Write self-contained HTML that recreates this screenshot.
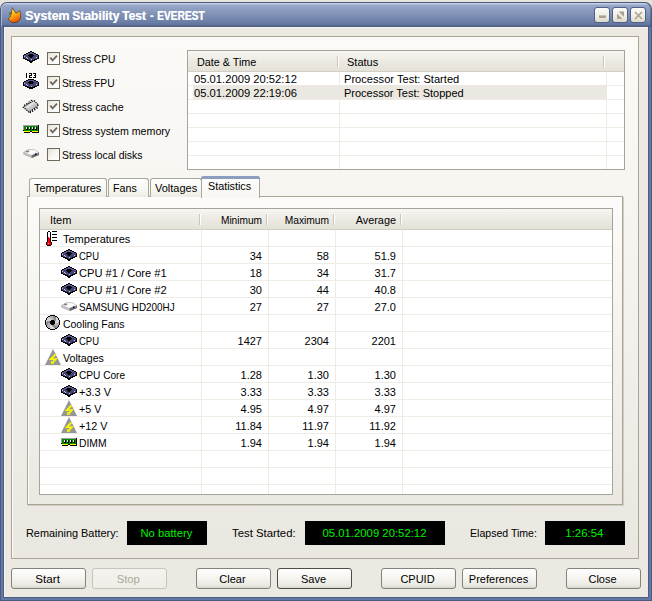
<!DOCTYPE html><html><head><meta charset="utf-8"><style>
*{box-sizing:border-box;margin:0;padding:0}
html,body{width:652px;height:601px;overflow:hidden;background:#e7e4db;font-family:"Liberation Sans",sans-serif;font-size:11px;line-height:14px;color:#000}
.a{position:absolute}
svg{position:absolute;overflow:visible}
#win{position:absolute;left:0;top:2px;width:652px;height:599px;background:#4b5b80;border-radius:7px 7px 0 0}
#title{position:absolute;left:1px;top:1px;width:650px;height:24px;border-radius:6px 6px 0 0;
 background:linear-gradient(#c4cfe8 0,#c4cfe8 1px,#98a8c8 2px,#8595b9 10px,#6e82aa 18px,#5f749c 22px,#4f5f85 23px,#4a5a80 24px);box-shadow:inset 1px 0 0 rgba(200,212,236,0.6), inset -1px 0 0 rgba(60,75,110,0.4)}
#frame{position:absolute;left:1px;top:25px;width:650px;height:573px;background:#6379a3;border-left:0;}
#fin{position:absolute;left:3px;top:27px;width:646px;height:571px;border:1px solid #4b5d86;border-top:0}
#body{position:absolute;left:4px;top:27px;width:644px;height:570px;background:#ece9e2;border-top:1px solid #f7f4ee;border-left:1px solid #f7f4ee}
.ttl{position:absolute;left:26px;top:9px;color:#fff;font-weight:bold;font-size:12.5px;white-space:nowrap;transform-origin:0 0}
.tb{position:absolute;top:7px;width:16px;height:16px;border:1px solid #4f6088;border-radius:3px;background:linear-gradient(#fdfcf9,#ebe8dd 70%,#dcd8cc)}
.panel{position:absolute;border:1px solid #aca497;box-shadow:inset 1px 1px 0 #fbfaf6}
.t{position:absolute;white-space:nowrap;transform-origin:0 0}
.n{position:absolute;white-space:nowrap;text-align:right}
.cb{position:absolute;left:47px;width:13px;height:13px;border:1px solid #6f695c;background:linear-gradient(135deg,#e2dfd6,#f6f5f0 45%,#fff)}
.lv{position:absolute;background:#fff;border:1px solid #a5a39b;overflow:hidden}
.hdr{position:absolute;left:0;top:0;height:21px;background:linear-gradient(#f7f6f2,#ece9e2 55%,#e4e1d8);border-bottom:1px solid #d3cfc4}
.dv{position:absolute;top:5px;width:2px;height:11px;border-left:1px solid #c9c5b9;border-right:1px solid #fff}
.btn{position:absolute;top:568px;width:75px;height:21px;border:1px solid #858379;border-radius:3px;background:linear-gradient(#ffffff,#f6f5f1 45%,#ebe9e3 85%,#d9d6cc);text-align:center;line-height:20px;padding-right:2px}
.btn span{display:inline-block}
.disp{position:absolute;top:521px;height:24px;background:#000;color:#00f000;text-align:center;line-height:25px}
.disp span{display:inline-block}
.gh{position:absolute;height:1px;background:#eeece5}
.gv{position:absolute;width:1px;background:#eeece5}
.tab{position:absolute;height:19px;border:1px solid #a9a69c;border-bottom:none;border-radius:3px 3px 0 0;background:linear-gradient(#fefefd,#f5f4ef 70%,#ecebe4)}
</style></head><body>
<div id="win"><div id="title"></div><div id="frame"></div></div><div id="fin"></div><div id="body"></div>
<svg width="0" height="0" style="left:0;top:0"><defs>
<linearGradient id="fl" x1="0.2" y1="0" x2="0.6" y2="1"><stop offset="0" stop-color="#fffa50"/><stop offset="0.35" stop-color="#ffc818"/><stop offset="0.6" stop-color="#ff9a10"/><stop offset="1" stop-color="#e84800"/></linearGradient>
<linearGradient id="hddg" x1="0" y1="0" x2="1" y2="1"><stop offset="0" stop-color="#e0e0e0"/><stop offset="0.5" stop-color="#ffffff"/><stop offset="1" stop-color="#c8c8c8"/></linearGradient>
<g id="volt">
 <polygon points="8,0 16,16 0,16" fill="#969696"/>
 <path d="M10.5,5.5 L5.8,10.2 L10.8,10.2 L7.6,13.6" stroke="#f8f800" stroke-width="1.8" fill="none" stroke-linejoin="miter"/><polygon points="6,11.5 6.2,15 9.2,14.8" fill="#f8f800"/>
</g>
<g id="hdd">
 <polygon points="0.5,3 5,0.5 11.5,0.5 16,3.5 16,6 9,9 0.5,5.5" fill="#9a9a9a"/>
 <polygon points="1,3 5,1 11.5,1 15.5,3.6 8.5,6.5" fill="url(#hddg)"/>
 <ellipse cx="4.5" cy="2.4" rx="1.8" ry="0.9" fill="#808080"/>
 <polygon points="1,3.2 8.5,6.6 8.5,8.6 0.8,5.2" fill="#c4c4c4"/>
 <polygon points="8.5,6.6 15.8,3.6 15.8,6 9,8.8" fill="#666"/>
 <rect x="12" y="4.5" width="1.5" height="1.5" fill="#000"/><rect x="13.6" y="4" width="1.5" height="1.6" fill="#8888e0"/>
</g>
</defs></svg>
<svg style="left:8px;top:7px" width="14" height="17" viewBox="0 0 14 17"><path d="M4.4,0.6 C5.5,2.5 6.5,4.5 7.9,6.2 C9.5,5.5 10.8,4.8 11.7,3.6 C12.6,6 13.2,9.5 11.8,12.5 C10.5,15 7.5,16 5,15.6 C2.8,15.2 1.2,13.6 0.4,11.5 L2.4,9.6 L1.8,5.6 L3.3,7.4 C3.4,5 3.8,2.5 4.4,0.6 Z" fill="url(#fl)" stroke="#4a3020" stroke-width="0.7" stroke-linejoin="round"/></svg>
<div class="ttl" style="left:25px;transform:scaleX(1.0);text-shadow:0.5px 0 0 rgba(255,255,255,0.7)">System</div>
<div class="ttl" style="left:72px;transform:scaleX(0.97);text-shadow:0.5px 0 0 rgba(255,255,255,0.7)">Stability</div>
<div class="ttl" style="left:122px;transform:scaleX(0.96);text-shadow:0.5px 0 0 rgba(255,255,255,0.7)">Test</div>
<div class="ttl" style="left:150px;transform:scaleX(0.8);text-shadow:0.5px 0 0 rgba(255,255,255,0.7)">-</div>
<div class="ttl" style="left:157px;transform:scaleX(0.815);text-shadow:0.5px 0 0 rgba(255,255,255,0.7)">EVEREST</div>
<div class="tb" style="left:594px"><div class="a" style="left:4px;top:7px;width:7px;height:3px;background:#aaa48f;border-top:1px solid #c9c4b0"></div></div>
<div class="tb" style="left:612px"><svg style="left:0.5px;top:0.5px" width="13" height="13"><path d="M3,4.5 L3,10 L8.5,10 Z" fill="#aaa48f"/><path d="M10,2.5 L10,8 L4.5,2.5 Z" fill="#aaa48f"/></svg></div>
<div class="tb" style="left:630px"><svg style="left:0.5px;top:0.5px" width="13" height="13"><path d="M3,3 L10,10 M10,3 L3,10" stroke="#aaa48f" stroke-width="1.6"/></svg></div>
<div class="panel" style="left:11px;top:36px;width:628px;height:523px;background:linear-gradient(#fbfaf7,#f4f3ee 45%,#e9e7e0)"></div>
<div class="cb" style="top:52px"><svg style="left:0;top:0" width="11" height="11"><path d="M2.3,4.6 L4.6,7.4 L9,2.6" stroke="#6f6a5e" stroke-width="1.9" fill="none"/></svg></div>
<div class="t" style="left:62px;top:52px;transform:scaleX(0.93);">Stress CPU</div>
<div class="cb" style="top:76px"><svg style="left:0;top:0" width="11" height="11"><path d="M2.3,4.6 L4.6,7.4 L9,2.6" stroke="#6f6a5e" stroke-width="1.9" fill="none"/></svg></div>
<div class="t" style="left:62px;top:76px;transform:scaleX(0.936);">Stress FPU</div>
<div class="cb" style="top:100px"><svg style="left:0;top:0" width="11" height="11"><path d="M2.3,4.6 L4.6,7.4 L9,2.6" stroke="#6f6a5e" stroke-width="1.9" fill="none"/></svg></div>
<div class="t" style="left:62px;top:100px;transform:scaleX(0.97);">Stress cache</div>
<div class="cb" style="top:124px"><svg style="left:0;top:0" width="11" height="11"><path d="M2.3,4.6 L4.6,7.4 L9,2.6" stroke="#6f6a5e" stroke-width="1.9" fill="none"/></svg></div>
<div class="t" style="left:62px;top:124px;transform:scaleX(0.967);">Stress system memory</div>
<div class="cb" style="top:148px"></div>
<div class="t" style="left:62px;top:148px;transform:scaleX(0.946);">Stress local disks</div>
<svg style="left:23px;top:51px" width="16" height="12" shape-rendering="crispEdges"><rect x="7" y="0" width="2" height="1" fill="#000"/><rect x="5" y="1" width="2" height="1" fill="#000"/><rect x="7" y="1" width="2" height="1" fill="#5c5d94"/><rect x="9" y="1" width="2" height="1" fill="#000"/><rect x="3" y="2" width="2" height="1" fill="#000"/><rect x="5" y="2" width="6" height="1" fill="#5c5d94"/><rect x="11" y="2" width="2" height="1" fill="#000"/><rect x="1" y="3" width="2" height="1" fill="#000"/><rect x="3" y="3" width="3" height="1" fill="#5c5d94"/><rect x="6" y="3" width="4" height="1" fill="#000"/><rect x="10" y="3" width="3" height="1" fill="#5c5d94"/><rect x="13" y="3" width="2" height="1" fill="#000"/><rect x="0" y="4" width="1" height="1" fill="#000"/><rect x="1" y="4" width="2" height="1" fill="#5c5d94"/><rect x="3" y="4" width="2" height="1" fill="#434474"/><rect x="5" y="4" width="6" height="1" fill="#000"/><rect x="11" y="4" width="2" height="1" fill="#434474"/><rect x="13" y="4" width="2" height="1" fill="#5c5d94"/><rect x="15" y="4" width="1" height="1" fill="#000"/><rect x="0" y="5" width="1" height="1" fill="#000"/><rect x="1" y="5" width="1" height="1" fill="#c8c8d8"/><rect x="2" y="5" width="4" height="1" fill="#434474"/><rect x="6" y="5" width="4" height="1" fill="#000"/><rect x="10" y="5" width="5" height="1" fill="#434474"/><rect x="15" y="5" width="1" height="1" fill="#000"/><rect x="0" y="6" width="1" height="1" fill="#000"/><rect x="1" y="6" width="2" height="1" fill="#434474"/><rect x="3" y="6" width="1" height="1" fill="#c8c8d8"/><rect x="4" y="6" width="3" height="1" fill="#434474"/><rect x="7" y="6" width="2" height="1" fill="#000"/><rect x="9" y="6" width="4" height="1" fill="#434474"/><rect x="13" y="6" width="1" height="1" fill="#c8c8d8"/><rect x="14" y="6" width="1" height="1" fill="#434474"/><rect x="15" y="6" width="1" height="1" fill="#000"/><rect x="0" y="7" width="2" height="1" fill="#000"/><rect x="2" y="7" width="2" height="1" fill="#434474"/><rect x="4" y="7" width="1" height="1" fill="#c8c8d8"/><rect x="5" y="7" width="9" height="1" fill="#434474"/><rect x="14" y="7" width="2" height="1" fill="#000"/><rect x="2" y="8" width="3" height="1" fill="#000"/><rect x="5" y="8" width="3" height="1" fill="#434474"/><rect x="8" y="8" width="1" height="1" fill="#c8c8d8"/><rect x="9" y="8" width="2" height="1" fill="#434474"/><rect x="11" y="8" width="3" height="1" fill="#000"/><rect x="4" y="9" width="3" height="1" fill="#000"/><rect x="7" y="9" width="2" height="1" fill="#434474"/><rect x="9" y="9" width="3" height="1" fill="#000"/><rect x="6" y="10" width="4" height="1" fill="#000"/><rect x="7" y="11" width="2" height="1" fill="#000"/></svg>
<svg style="left:26px;top:73px" width="11" height="5" shape-rendering="crispEdges"><path d="M0.5,0 V5 M3,0.5 H5.5 V2.5 H3.5 V4.5 H6 M7,0.5 H9.5 V4.5 H7 M8,2.5 H9.5" stroke="#000" stroke-width="1" fill="none"/></svg>
<svg style="left:23px;top:79px" width="16" height="10" shape-rendering="crispEdges"><rect x="5" y="0" width="6" height="1" fill="#000"/><rect x="3" y="1" width="2" height="1" fill="#000"/><rect x="5" y="1" width="6" height="1" fill="#5c5d94"/><rect x="11" y="1" width="2" height="1" fill="#000"/><rect x="1" y="2" width="2" height="1" fill="#000"/><rect x="3" y="2" width="3" height="1" fill="#5c5d94"/><rect x="6" y="2" width="4" height="1" fill="#000"/><rect x="10" y="2" width="3" height="1" fill="#5c5d94"/><rect x="13" y="2" width="2" height="1" fill="#000"/><rect x="0" y="3" width="1" height="1" fill="#000"/><rect x="1" y="3" width="2" height="1" fill="#5c5d94"/><rect x="3" y="3" width="2" height="1" fill="#434474"/><rect x="5" y="3" width="6" height="1" fill="#000"/><rect x="11" y="3" width="2" height="1" fill="#434474"/><rect x="13" y="3" width="2" height="1" fill="#5c5d94"/><rect x="15" y="3" width="1" height="1" fill="#000"/><rect x="0" y="4" width="1" height="1" fill="#000"/><rect x="1" y="4" width="1" height="1" fill="#c8c8d8"/><rect x="2" y="4" width="4" height="1" fill="#434474"/><rect x="6" y="4" width="4" height="1" fill="#000"/><rect x="10" y="4" width="5" height="1" fill="#434474"/><rect x="15" y="4" width="1" height="1" fill="#000"/><rect x="0" y="5" width="1" height="1" fill="#000"/><rect x="1" y="5" width="2" height="1" fill="#434474"/><rect x="3" y="5" width="1" height="1" fill="#c8c8d8"/><rect x="4" y="5" width="9" height="1" fill="#434474"/><rect x="13" y="5" width="1" height="1" fill="#c8c8d8"/><rect x="14" y="5" width="1" height="1" fill="#434474"/><rect x="15" y="5" width="1" height="1" fill="#000"/><rect x="0" y="6" width="2" height="1" fill="#000"/><rect x="2" y="6" width="2" height="1" fill="#434474"/><rect x="4" y="6" width="1" height="1" fill="#c8c8d8"/><rect x="5" y="6" width="9" height="1" fill="#434474"/><rect x="14" y="6" width="2" height="1" fill="#000"/><rect x="2" y="7" width="3" height="1" fill="#000"/><rect x="5" y="7" width="3" height="1" fill="#434474"/><rect x="8" y="7" width="1" height="1" fill="#c8c8d8"/><rect x="9" y="7" width="2" height="1" fill="#434474"/><rect x="11" y="7" width="3" height="1" fill="#000"/><rect x="4" y="8" width="8" height="1" fill="#000"/><rect x="6" y="9" width="4" height="1" fill="#000"/></svg>
<svg style="left:22px;top:99px" width="18" height="14">
 <polygon points="12,1.4 16.6,6.1 7.1,13.2 1.2,8.1" fill="#bdbdbd" stroke="#000" stroke-width="1.1" stroke-dasharray="1.3,1"/>
 <polygon points="11.5,2.5 15,6 8,11 3,8" fill="#c8c8c8"/>
 <polygon points="11.5,2.5 13,4 5,9.6 3,8" fill="#e4e4e4"/>
 <path d="M3,6.8 L2.4,5.6 M5.2,5.2 L4.6,4 M7.4,3.6 L6.8,2.4 M9.6,2.1 L9,0.9 M14.6,8.2 L15.4,9.6 M12.4,9.8 L13.2,11.2 M10.2,11.4 L11,12.8 M8,13 L8.6,14" stroke="#000" stroke-width="1.2"/>
</svg>
<svg style="left:23px;top:125px" width="16" height="8" shape-rendering="crispEdges"><rect x="0" y="0" width="15" height="1" fill="#a49ea4"/><rect x="15" y="0" width="1" height="1" fill="#000"/><rect x="0" y="1" width="1" height="1" fill="#a49ea4"/><rect x="1" y="1" width="14" height="1" fill="#008c00"/><rect x="15" y="1" width="1" height="1" fill="#000"/><rect x="0" y="2" width="1" height="1" fill="#a49ea4"/><rect x="1" y="2" width="2" height="1" fill="#008c00"/><rect x="3" y="2" width="1" height="1" fill="#f0f0f0"/><rect x="4" y="2" width="1" height="1" fill="#000"/><rect x="5" y="2" width="1" height="1" fill="#008c00"/><rect x="6" y="2" width="1" height="1" fill="#f0f0f0"/><rect x="7" y="2" width="1" height="1" fill="#000"/><rect x="8" y="2" width="1" height="1" fill="#008c00"/><rect x="9" y="2" width="1" height="1" fill="#f0f0f0"/><rect x="10" y="2" width="1" height="1" fill="#000"/><rect x="11" y="2" width="1" height="1" fill="#008c00"/><rect x="12" y="2" width="1" height="1" fill="#f0f0f0"/><rect x="13" y="2" width="1" height="1" fill="#000"/><rect x="14" y="2" width="1" height="1" fill="#008c00"/><rect x="15" y="2" width="1" height="1" fill="#000"/><rect x="0" y="3" width="1" height="1" fill="#a49ea4"/><rect x="1" y="3" width="2" height="1" fill="#008c00"/><rect x="3" y="3" width="1" height="1" fill="#f0f0f0"/><rect x="4" y="3" width="1" height="1" fill="#000"/><rect x="5" y="3" width="1" height="1" fill="#008c00"/><rect x="6" y="3" width="1" height="1" fill="#f0f0f0"/><rect x="7" y="3" width="1" height="1" fill="#000"/><rect x="8" y="3" width="1" height="1" fill="#008c00"/><rect x="9" y="3" width="1" height="1" fill="#f0f0f0"/><rect x="10" y="3" width="1" height="1" fill="#000"/><rect x="11" y="3" width="1" height="1" fill="#008c00"/><rect x="12" y="3" width="1" height="1" fill="#f0f0f0"/><rect x="13" y="3" width="1" height="1" fill="#000"/><rect x="14" y="3" width="1" height="1" fill="#008c00"/><rect x="15" y="3" width="1" height="1" fill="#000"/><rect x="0" y="4" width="1" height="1" fill="#a49ea4"/><rect x="1" y="4" width="2" height="1" fill="#008c00"/><rect x="3" y="4" width="2" height="1" fill="#000"/><rect x="5" y="4" width="1" height="1" fill="#008c00"/><rect x="6" y="4" width="2" height="1" fill="#000"/><rect x="8" y="4" width="1" height="1" fill="#008c00"/><rect x="9" y="4" width="2" height="1" fill="#000"/><rect x="11" y="4" width="1" height="1" fill="#008c00"/><rect x="12" y="4" width="2" height="1" fill="#000"/><rect x="14" y="4" width="1" height="1" fill="#008c00"/><rect x="15" y="4" width="1" height="1" fill="#000"/><rect x="0" y="5" width="1" height="1" fill="#000"/><rect x="1" y="5" width="14" height="1" fill="#008c00"/><rect x="15" y="5" width="1" height="1" fill="#000"/><rect x="1" y="6" width="6" height="1" fill="#ffff00"/><rect x="7" y="6" width="2" height="1" fill="#000"/><rect x="9" y="6" width="6" height="1" fill="#ffff00"/><rect x="15" y="6" width="1" height="1" fill="#000"/><rect x="1" y="7" width="6" height="1" fill="#000"/><rect x="9" y="7" width="7" height="1" fill="#000"/></svg>
<svg style="left:23px;top:149px" width="16" height="9"><use href="#hdd"/></svg>
<div class="lv" style="left:187px;top:50px;width:438px;height:120px">
 <div class="hdr" style="width:436px"></div>
 <div class="dv" style="left:149px"></div><div class="dv" style="left:415px"></div>
 <div class="gh" style="left:0;top:34px;width:436px"></div>
 <div class="gh" style="left:0;top:48px;width:436px"></div>
 <div class="gh" style="left:0;top:62px;width:436px"></div>
 <div class="gh" style="left:0;top:76px;width:436px"></div>
 <div class="gh" style="left:0;top:90px;width:436px"></div>
 <div class="gh" style="left:0;top:104px;width:436px"></div>
 <div class="gv" style="left:151px;top:21px;height:97px"></div>
 <div class="gv" style="left:418px;top:21px;height:97px"></div>
 <div class="a" style="left:5px;top:35px;width:414px;height:13px;background:#ebe8e1"></div>
 <div class="a" style="left:5px;top:34px;width:414px;height:1px;background:#ebe8e1"></div>
<div class="t" style="left:9px;top:4px;transform:scaleX(0.98);">Date &amp; Time</div>
<div class="t" style="left:159px;top:4px;">Status</div>
<div class="t" style="left:6px;top:21px;transform:scaleX(1.02);">05.01.2009 20:52:12</div>
<div class="t" style="left:156px;top:21px;transform:scaleX(1.01);">Processor Test: Started</div>
<div class="t" style="left:6px;top:35px;transform:scaleX(1.02);">05.01.2009 22:19:06</div>
<div class="t" style="left:156px;top:35px;">Processor Test: Stopped</div>
</div>
<div class="panel" style="left:27px;top:196px;width:596px;height:309px;background:linear-gradient(#fcfbf9,#f4f3ee 45%,#eae8e1);box-shadow:inset 1px 1px 0 #fdfdfb, 1px 1px 0 #d0cdc3"></div>
<div class="tab" style="left:29px;top:178px;width:78px"></div>
<div class="t" style="left:34px;top:181px;">Temperatures</div>
<div class="tab" style="left:108px;top:178px;width:41px"></div>
<div class="t" style="left:113px;top:181px;transform:scaleX(0.97);">Fans</div>
<div class="tab" style="left:150px;top:178px;width:52px"></div>
<div class="t" style="left:155px;top:181px;">Voltages</div>
<div class="a" style="left:201px;top:176px;width:59px;height:22px;border:1px solid #a9a69c;border-bottom:none;border-top:none;border-radius:3px 3px 0 0;background:linear-gradient(#fcfcfa,#f8f7f4)"></div>
<div class="a" style="left:201px;top:176px;width:59px;height:3px;background:#8d9dbe;border-radius:3px 3px 0 0"></div>
<div class="t" style="left:208px;top:179px;transform:scaleX(0.98);">Statistics</div>
<div class="lv" style="left:39px;top:208px;width:574px;height:287px">
 <div class="hdr" style="width:572px"></div>
 <div class="dv" style="left:159px"></div>
 <div class="dv" style="left:226px"></div>
 <div class="dv" style="left:293px"></div>
 <div class="dv" style="left:360px"></div>
 <div class="gh" style="left:0;top:37px;width:572px"></div>
 <div class="gh" style="left:0;top:54px;width:572px"></div>
 <div class="gh" style="left:0;top:71px;width:572px"></div>
 <div class="gh" style="left:0;top:88px;width:572px"></div>
 <div class="gh" style="left:0;top:105px;width:572px"></div>
 <div class="gh" style="left:0;top:122px;width:572px"></div>
 <div class="gh" style="left:0;top:139px;width:572px"></div>
 <div class="gh" style="left:0;top:156px;width:572px"></div>
 <div class="gh" style="left:0;top:173px;width:572px"></div>
 <div class="gh" style="left:0;top:190px;width:572px"></div>
 <div class="gh" style="left:0;top:207px;width:572px"></div>
 <div class="gh" style="left:0;top:224px;width:572px"></div>
 <div class="gh" style="left:0;top:241px;width:572px"></div>
 <div class="gh" style="left:0;top:258px;width:572px"></div>
 <div class="gh" style="left:0;top:275px;width:572px"></div>
 <div class="gh" style="left:0;top:292px;width:572px"></div>
 <div class="gv" style="left:161px;top:21px;height:270px"></div>
 <div class="gv" style="left:228px;top:21px;height:270px"></div>
 <div class="gv" style="left:295px;top:21px;height:270px"></div>
 <div class="gv" style="left:362px;top:21px;height:270px"></div>
<div class="t" style="left:10px;top:4px;">Item</div>
<div class="n" style="left:160px;top:4px;width:62px;transform:scaleX(0.92);transform-origin:100% 0;">Minimum</div>
<div class="n" style="left:227px;top:4px;width:62px;transform:scaleX(0.93);transform-origin:100% 0;">Maximum</div>
<div class="n" style="left:294px;top:4px;width:62px;transform:scaleX(0.99);transform-origin:100% 0;">Average</div>
<div class="t" style="left:23px;top:23px;">Temperatures</div>
 <svg style="left:6px;top:22px" width="12" height="15" shape-rendering="crispEdges"><rect x="2" y="0" width="2" height="1" fill="#000"/><rect x="6" y="0" width="5" height="1" fill="#000"/><rect x="1" y="1" width="1" height="1" fill="#000"/><rect x="2" y="1" width="2" height="1" fill="#fff"/><rect x="4" y="1" width="1" height="1" fill="#000"/><rect x="1" y="2" width="1" height="1" fill="#000"/><rect x="2" y="2" width="2" height="1" fill="#fff"/><rect x="4" y="2" width="1" height="1" fill="#000"/><rect x="1" y="3" width="1" height="1" fill="#000"/><rect x="2" y="3" width="2" height="1" fill="#fff"/><rect x="4" y="3" width="1" height="1" fill="#000"/><rect x="6" y="3" width="5" height="1" fill="#000"/><rect x="1" y="4" width="1" height="1" fill="#000"/><rect x="2" y="4" width="2" height="1" fill="#fff"/><rect x="4" y="4" width="1" height="1" fill="#000"/><rect x="1" y="5" width="1" height="1" fill="#000"/><rect x="2" y="5" width="2" height="1" fill="#fff"/><rect x="4" y="5" width="1" height="1" fill="#000"/><rect x="1" y="6" width="1" height="1" fill="#000"/><rect x="2" y="6" width="1" height="1" fill="#ff0000"/><rect x="3" y="6" width="1" height="1" fill="#fff"/><rect x="4" y="6" width="1" height="1" fill="#000"/><rect x="6" y="6" width="5" height="1" fill="#000"/><rect x="1" y="7" width="1" height="1" fill="#000"/><rect x="2" y="7" width="2" height="1" fill="#ff0000"/><rect x="4" y="7" width="1" height="1" fill="#000"/><rect x="1" y="8" width="1" height="1" fill="#000"/><rect x="2" y="8" width="2" height="1" fill="#ff0000"/><rect x="4" y="8" width="1" height="1" fill="#000"/><rect x="1" y="9" width="1" height="1" fill="#000"/><rect x="2" y="9" width="2" height="1" fill="#ff0000"/><rect x="4" y="9" width="1" height="1" fill="#000"/><rect x="6" y="9" width="5" height="1" fill="#000"/><rect x="1" y="10" width="1" height="1" fill="#000"/><rect x="2" y="10" width="2" height="1" fill="#ff0000"/><rect x="4" y="10" width="1" height="1" fill="#000"/><rect x="0" y="11" width="1" height="1" fill="#000"/><rect x="1" y="11" width="4" height="1" fill="#ff0000"/><rect x="5" y="11" width="1" height="1" fill="#000"/><rect x="0" y="12" width="1" height="1" fill="#000"/><rect x="1" y="12" width="1" height="1" fill="#ff0000"/><rect x="2" y="12" width="1" height="1" fill="#ff9090"/><rect x="3" y="12" width="2" height="1" fill="#ff0000"/><rect x="5" y="12" width="1" height="1" fill="#000"/><rect x="0" y="13" width="1" height="1" fill="#000"/><rect x="1" y="13" width="4" height="1" fill="#ff0000"/><rect x="5" y="13" width="1" height="1" fill="#000"/><rect x="1" y="14" width="4" height="1" fill="#000"/></svg>
<div class="t" style="left:39px;top:40px;transform:scaleX(0.86);">CPU</div>
<div class="n" style="left:160px;top:40px;width:62px;">34</div>
<div class="n" style="left:227px;top:40px;width:62px;">58</div>
<div class="n" style="left:294px;top:40px;width:62px;">51.9</div>
 <svg style="left:21px;top:40px" width="16" height="12" shape-rendering="crispEdges"><rect x="7" y="0" width="2" height="1" fill="#000"/><rect x="5" y="1" width="2" height="1" fill="#000"/><rect x="7" y="1" width="2" height="1" fill="#5c5d94"/><rect x="9" y="1" width="2" height="1" fill="#000"/><rect x="3" y="2" width="2" height="1" fill="#000"/><rect x="5" y="2" width="6" height="1" fill="#5c5d94"/><rect x="11" y="2" width="2" height="1" fill="#000"/><rect x="1" y="3" width="2" height="1" fill="#000"/><rect x="3" y="3" width="3" height="1" fill="#5c5d94"/><rect x="6" y="3" width="4" height="1" fill="#000"/><rect x="10" y="3" width="3" height="1" fill="#5c5d94"/><rect x="13" y="3" width="2" height="1" fill="#000"/><rect x="0" y="4" width="1" height="1" fill="#000"/><rect x="1" y="4" width="2" height="1" fill="#5c5d94"/><rect x="3" y="4" width="2" height="1" fill="#434474"/><rect x="5" y="4" width="6" height="1" fill="#000"/><rect x="11" y="4" width="2" height="1" fill="#434474"/><rect x="13" y="4" width="2" height="1" fill="#5c5d94"/><rect x="15" y="4" width="1" height="1" fill="#000"/><rect x="0" y="5" width="1" height="1" fill="#000"/><rect x="1" y="5" width="1" height="1" fill="#c8c8d8"/><rect x="2" y="5" width="4" height="1" fill="#434474"/><rect x="6" y="5" width="4" height="1" fill="#000"/><rect x="10" y="5" width="5" height="1" fill="#434474"/><rect x="15" y="5" width="1" height="1" fill="#000"/><rect x="0" y="6" width="1" height="1" fill="#000"/><rect x="1" y="6" width="2" height="1" fill="#434474"/><rect x="3" y="6" width="1" height="1" fill="#c8c8d8"/><rect x="4" y="6" width="3" height="1" fill="#434474"/><rect x="7" y="6" width="2" height="1" fill="#000"/><rect x="9" y="6" width="4" height="1" fill="#434474"/><rect x="13" y="6" width="1" height="1" fill="#c8c8d8"/><rect x="14" y="6" width="1" height="1" fill="#434474"/><rect x="15" y="6" width="1" height="1" fill="#000"/><rect x="0" y="7" width="2" height="1" fill="#000"/><rect x="2" y="7" width="2" height="1" fill="#434474"/><rect x="4" y="7" width="1" height="1" fill="#c8c8d8"/><rect x="5" y="7" width="9" height="1" fill="#434474"/><rect x="14" y="7" width="2" height="1" fill="#000"/><rect x="2" y="8" width="3" height="1" fill="#000"/><rect x="5" y="8" width="3" height="1" fill="#434474"/><rect x="8" y="8" width="1" height="1" fill="#c8c8d8"/><rect x="9" y="8" width="2" height="1" fill="#434474"/><rect x="11" y="8" width="3" height="1" fill="#000"/><rect x="4" y="9" width="3" height="1" fill="#000"/><rect x="7" y="9" width="2" height="1" fill="#434474"/><rect x="9" y="9" width="3" height="1" fill="#000"/><rect x="6" y="10" width="4" height="1" fill="#000"/><rect x="7" y="11" width="2" height="1" fill="#000"/></svg>
<div class="t" style="left:39px;top:57px;transform:scaleX(1.01);">CPU #1 / Core #1</div>
<div class="n" style="left:160px;top:57px;width:62px;">18</div>
<div class="n" style="left:227px;top:57px;width:62px;">34</div>
<div class="n" style="left:294px;top:57px;width:62px;">31.7</div>
 <svg style="left:21px;top:57px" width="16" height="12" shape-rendering="crispEdges"><rect x="7" y="0" width="2" height="1" fill="#000"/><rect x="5" y="1" width="2" height="1" fill="#000"/><rect x="7" y="1" width="2" height="1" fill="#5c5d94"/><rect x="9" y="1" width="2" height="1" fill="#000"/><rect x="3" y="2" width="2" height="1" fill="#000"/><rect x="5" y="2" width="6" height="1" fill="#5c5d94"/><rect x="11" y="2" width="2" height="1" fill="#000"/><rect x="1" y="3" width="2" height="1" fill="#000"/><rect x="3" y="3" width="3" height="1" fill="#5c5d94"/><rect x="6" y="3" width="4" height="1" fill="#000"/><rect x="10" y="3" width="3" height="1" fill="#5c5d94"/><rect x="13" y="3" width="2" height="1" fill="#000"/><rect x="0" y="4" width="1" height="1" fill="#000"/><rect x="1" y="4" width="2" height="1" fill="#5c5d94"/><rect x="3" y="4" width="2" height="1" fill="#434474"/><rect x="5" y="4" width="6" height="1" fill="#000"/><rect x="11" y="4" width="2" height="1" fill="#434474"/><rect x="13" y="4" width="2" height="1" fill="#5c5d94"/><rect x="15" y="4" width="1" height="1" fill="#000"/><rect x="0" y="5" width="1" height="1" fill="#000"/><rect x="1" y="5" width="1" height="1" fill="#c8c8d8"/><rect x="2" y="5" width="4" height="1" fill="#434474"/><rect x="6" y="5" width="4" height="1" fill="#000"/><rect x="10" y="5" width="5" height="1" fill="#434474"/><rect x="15" y="5" width="1" height="1" fill="#000"/><rect x="0" y="6" width="1" height="1" fill="#000"/><rect x="1" y="6" width="2" height="1" fill="#434474"/><rect x="3" y="6" width="1" height="1" fill="#c8c8d8"/><rect x="4" y="6" width="3" height="1" fill="#434474"/><rect x="7" y="6" width="2" height="1" fill="#000"/><rect x="9" y="6" width="4" height="1" fill="#434474"/><rect x="13" y="6" width="1" height="1" fill="#c8c8d8"/><rect x="14" y="6" width="1" height="1" fill="#434474"/><rect x="15" y="6" width="1" height="1" fill="#000"/><rect x="0" y="7" width="2" height="1" fill="#000"/><rect x="2" y="7" width="2" height="1" fill="#434474"/><rect x="4" y="7" width="1" height="1" fill="#c8c8d8"/><rect x="5" y="7" width="9" height="1" fill="#434474"/><rect x="14" y="7" width="2" height="1" fill="#000"/><rect x="2" y="8" width="3" height="1" fill="#000"/><rect x="5" y="8" width="3" height="1" fill="#434474"/><rect x="8" y="8" width="1" height="1" fill="#c8c8d8"/><rect x="9" y="8" width="2" height="1" fill="#434474"/><rect x="11" y="8" width="3" height="1" fill="#000"/><rect x="4" y="9" width="3" height="1" fill="#000"/><rect x="7" y="9" width="2" height="1" fill="#434474"/><rect x="9" y="9" width="3" height="1" fill="#000"/><rect x="6" y="10" width="4" height="1" fill="#000"/><rect x="7" y="11" width="2" height="1" fill="#000"/></svg>
<div class="t" style="left:39px;top:74px;transform:scaleX(1.01);">CPU #1 / Core #2</div>
<div class="n" style="left:160px;top:74px;width:62px;">30</div>
<div class="n" style="left:227px;top:74px;width:62px;">44</div>
<div class="n" style="left:294px;top:74px;width:62px;">40.8</div>
 <svg style="left:21px;top:74px" width="16" height="12" shape-rendering="crispEdges"><rect x="7" y="0" width="2" height="1" fill="#000"/><rect x="5" y="1" width="2" height="1" fill="#000"/><rect x="7" y="1" width="2" height="1" fill="#5c5d94"/><rect x="9" y="1" width="2" height="1" fill="#000"/><rect x="3" y="2" width="2" height="1" fill="#000"/><rect x="5" y="2" width="6" height="1" fill="#5c5d94"/><rect x="11" y="2" width="2" height="1" fill="#000"/><rect x="1" y="3" width="2" height="1" fill="#000"/><rect x="3" y="3" width="3" height="1" fill="#5c5d94"/><rect x="6" y="3" width="4" height="1" fill="#000"/><rect x="10" y="3" width="3" height="1" fill="#5c5d94"/><rect x="13" y="3" width="2" height="1" fill="#000"/><rect x="0" y="4" width="1" height="1" fill="#000"/><rect x="1" y="4" width="2" height="1" fill="#5c5d94"/><rect x="3" y="4" width="2" height="1" fill="#434474"/><rect x="5" y="4" width="6" height="1" fill="#000"/><rect x="11" y="4" width="2" height="1" fill="#434474"/><rect x="13" y="4" width="2" height="1" fill="#5c5d94"/><rect x="15" y="4" width="1" height="1" fill="#000"/><rect x="0" y="5" width="1" height="1" fill="#000"/><rect x="1" y="5" width="1" height="1" fill="#c8c8d8"/><rect x="2" y="5" width="4" height="1" fill="#434474"/><rect x="6" y="5" width="4" height="1" fill="#000"/><rect x="10" y="5" width="5" height="1" fill="#434474"/><rect x="15" y="5" width="1" height="1" fill="#000"/><rect x="0" y="6" width="1" height="1" fill="#000"/><rect x="1" y="6" width="2" height="1" fill="#434474"/><rect x="3" y="6" width="1" height="1" fill="#c8c8d8"/><rect x="4" y="6" width="3" height="1" fill="#434474"/><rect x="7" y="6" width="2" height="1" fill="#000"/><rect x="9" y="6" width="4" height="1" fill="#434474"/><rect x="13" y="6" width="1" height="1" fill="#c8c8d8"/><rect x="14" y="6" width="1" height="1" fill="#434474"/><rect x="15" y="6" width="1" height="1" fill="#000"/><rect x="0" y="7" width="2" height="1" fill="#000"/><rect x="2" y="7" width="2" height="1" fill="#434474"/><rect x="4" y="7" width="1" height="1" fill="#c8c8d8"/><rect x="5" y="7" width="9" height="1" fill="#434474"/><rect x="14" y="7" width="2" height="1" fill="#000"/><rect x="2" y="8" width="3" height="1" fill="#000"/><rect x="5" y="8" width="3" height="1" fill="#434474"/><rect x="8" y="8" width="1" height="1" fill="#c8c8d8"/><rect x="9" y="8" width="2" height="1" fill="#434474"/><rect x="11" y="8" width="3" height="1" fill="#000"/><rect x="4" y="9" width="3" height="1" fill="#000"/><rect x="7" y="9" width="2" height="1" fill="#434474"/><rect x="9" y="9" width="3" height="1" fill="#000"/><rect x="6" y="10" width="4" height="1" fill="#000"/><rect x="7" y="11" width="2" height="1" fill="#000"/></svg>
<div class="t" style="left:39px;top:91px;transform:scaleX(0.9);">SAMSUNG HD200HJ</div>
<div class="n" style="left:160px;top:91px;width:62px;">27</div>
<div class="n" style="left:227px;top:91px;width:62px;">27</div>
<div class="n" style="left:294px;top:91px;width:62px;">27.0</div>
 <svg style="left:21px;top:93px" width="16" height="9"><use href="#hdd"/></svg>
<div class="t" style="left:23px;top:108px;transform:scaleX(0.95);">Cooling Fans</div>
 <svg style="left:5px;top:106px" width="15" height="15" shape-rendering="crispEdges"><rect x="5" y="0" width="5" height="1" fill="#000"/><rect x="3" y="1" width="2" height="1" fill="#000"/><rect x="5" y="1" width="3" height="1" fill="#b0b0b0"/><rect x="8" y="1" width="2" height="1" fill="#8c8c8c"/><rect x="10" y="1" width="2" height="1" fill="#000"/><rect x="2" y="2" width="1" height="1" fill="#000"/><rect x="3" y="2" width="1" height="1" fill="#d4d4d4"/><rect x="4" y="2" width="4" height="1" fill="#b0b0b0"/><rect x="8" y="2" width="3" height="1" fill="#8c8c8c"/><rect x="11" y="2" width="1" height="1" fill="#d4d4d4"/><rect x="12" y="2" width="1" height="1" fill="#000"/><rect x="1" y="3" width="1" height="1" fill="#000"/><rect x="2" y="3" width="4" height="1" fill="#d4d4d4"/><rect x="6" y="3" width="3" height="1" fill="#b0b0b0"/><rect x="9" y="3" width="2" height="1" fill="#8c8c8c"/><rect x="11" y="3" width="2" height="1" fill="#d4d4d4"/><rect x="13" y="3" width="1" height="1" fill="#000"/><rect x="1" y="4" width="1" height="1" fill="#000"/><rect x="2" y="4" width="5" height="1" fill="#d4d4d4"/><rect x="7" y="4" width="2" height="1" fill="#b0b0b0"/><rect x="9" y="4" width="2" height="1" fill="#8c8c8c"/><rect x="11" y="4" width="2" height="1" fill="#d4d4d4"/><rect x="13" y="4" width="1" height="1" fill="#000"/><rect x="0" y="5" width="1" height="1" fill="#000"/><rect x="1" y="5" width="5" height="1" fill="#d4d4d4"/><rect x="6" y="5" width="3" height="1" fill="#000"/><rect x="9" y="5" width="2" height="1" fill="#8c8c8c"/><rect x="11" y="5" width="3" height="1" fill="#d4d4d4"/><rect x="14" y="5" width="1" height="1" fill="#000"/><rect x="0" y="6" width="1" height="1" fill="#000"/><rect x="1" y="6" width="1" height="1" fill="#d4d4d4"/><rect x="2" y="6" width="3" height="1" fill="#8c8c8c"/><rect x="5" y="6" width="5" height="1" fill="#000"/><rect x="10" y="6" width="4" height="1" fill="#d4d4d4"/><rect x="14" y="6" width="1" height="1" fill="#000"/><rect x="0" y="7" width="1" height="1" fill="#000"/><rect x="1" y="7" width="4" height="1" fill="#8c8c8c"/><rect x="5" y="7" width="5" height="1" fill="#000"/><rect x="10" y="7" width="3" height="1" fill="#d4d4d4"/><rect x="13" y="7" width="1" height="1" fill="#b0b0b0"/><rect x="14" y="7" width="1" height="1" fill="#000"/><rect x="0" y="8" width="1" height="1" fill="#000"/><rect x="1" y="8" width="2" height="1" fill="#8c8c8c"/><rect x="3" y="8" width="2" height="1" fill="#b0b0b0"/><rect x="5" y="8" width="5" height="1" fill="#000"/><rect x="10" y="8" width="1" height="1" fill="#d4d4d4"/><rect x="11" y="8" width="3" height="1" fill="#b0b0b0"/><rect x="14" y="8" width="1" height="1" fill="#000"/><rect x="0" y="9" width="1" height="1" fill="#000"/><rect x="1" y="9" width="2" height="1" fill="#8c8c8c"/><rect x="3" y="9" width="2" height="1" fill="#b0b0b0"/><rect x="5" y="9" width="1" height="1" fill="#d4d4d4"/><rect x="6" y="9" width="3" height="1" fill="#000"/><rect x="9" y="9" width="5" height="1" fill="#b0b0b0"/><rect x="14" y="9" width="1" height="1" fill="#000"/><rect x="1" y="10" width="1" height="1" fill="#000"/><rect x="2" y="10" width="3" height="1" fill="#b0b0b0"/><rect x="5" y="10" width="2" height="1" fill="#d4d4d4"/><rect x="7" y="10" width="3" height="1" fill="#8c8c8c"/><rect x="10" y="10" width="3" height="1" fill="#b0b0b0"/><rect x="13" y="10" width="1" height="1" fill="#000"/><rect x="1" y="11" width="1" height="1" fill="#000"/><rect x="2" y="11" width="3" height="1" fill="#b0b0b0"/><rect x="5" y="11" width="3" height="1" fill="#d4d4d4"/><rect x="8" y="11" width="5" height="1" fill="#8c8c8c"/><rect x="13" y="11" width="1" height="1" fill="#000"/><rect x="2" y="12" width="1" height="1" fill="#000"/><rect x="3" y="12" width="2" height="1" fill="#b0b0b0"/><rect x="5" y="12" width="4" height="1" fill="#d4d4d4"/><rect x="9" y="12" width="3" height="1" fill="#8c8c8c"/><rect x="12" y="12" width="1" height="1" fill="#000"/><rect x="3" y="13" width="2" height="1" fill="#000"/><rect x="5" y="13" width="5" height="1" fill="#d4d4d4"/><rect x="10" y="13" width="2" height="1" fill="#000"/><rect x="5" y="14" width="5" height="1" fill="#000"/></svg>
<div class="t" style="left:39px;top:125px;transform:scaleX(0.86);">CPU</div>
<div class="n" style="left:160px;top:125px;width:62px;">1427</div>
<div class="n" style="left:227px;top:125px;width:62px;">2304</div>
<div class="n" style="left:294px;top:125px;width:62px;">2201</div>
 <svg style="left:21px;top:125px" width="16" height="12" shape-rendering="crispEdges"><rect x="7" y="0" width="2" height="1" fill="#000"/><rect x="5" y="1" width="2" height="1" fill="#000"/><rect x="7" y="1" width="2" height="1" fill="#5c5d94"/><rect x="9" y="1" width="2" height="1" fill="#000"/><rect x="3" y="2" width="2" height="1" fill="#000"/><rect x="5" y="2" width="6" height="1" fill="#5c5d94"/><rect x="11" y="2" width="2" height="1" fill="#000"/><rect x="1" y="3" width="2" height="1" fill="#000"/><rect x="3" y="3" width="3" height="1" fill="#5c5d94"/><rect x="6" y="3" width="4" height="1" fill="#000"/><rect x="10" y="3" width="3" height="1" fill="#5c5d94"/><rect x="13" y="3" width="2" height="1" fill="#000"/><rect x="0" y="4" width="1" height="1" fill="#000"/><rect x="1" y="4" width="2" height="1" fill="#5c5d94"/><rect x="3" y="4" width="2" height="1" fill="#434474"/><rect x="5" y="4" width="6" height="1" fill="#000"/><rect x="11" y="4" width="2" height="1" fill="#434474"/><rect x="13" y="4" width="2" height="1" fill="#5c5d94"/><rect x="15" y="4" width="1" height="1" fill="#000"/><rect x="0" y="5" width="1" height="1" fill="#000"/><rect x="1" y="5" width="1" height="1" fill="#c8c8d8"/><rect x="2" y="5" width="4" height="1" fill="#434474"/><rect x="6" y="5" width="4" height="1" fill="#000"/><rect x="10" y="5" width="5" height="1" fill="#434474"/><rect x="15" y="5" width="1" height="1" fill="#000"/><rect x="0" y="6" width="1" height="1" fill="#000"/><rect x="1" y="6" width="2" height="1" fill="#434474"/><rect x="3" y="6" width="1" height="1" fill="#c8c8d8"/><rect x="4" y="6" width="3" height="1" fill="#434474"/><rect x="7" y="6" width="2" height="1" fill="#000"/><rect x="9" y="6" width="4" height="1" fill="#434474"/><rect x="13" y="6" width="1" height="1" fill="#c8c8d8"/><rect x="14" y="6" width="1" height="1" fill="#434474"/><rect x="15" y="6" width="1" height="1" fill="#000"/><rect x="0" y="7" width="2" height="1" fill="#000"/><rect x="2" y="7" width="2" height="1" fill="#434474"/><rect x="4" y="7" width="1" height="1" fill="#c8c8d8"/><rect x="5" y="7" width="9" height="1" fill="#434474"/><rect x="14" y="7" width="2" height="1" fill="#000"/><rect x="2" y="8" width="3" height="1" fill="#000"/><rect x="5" y="8" width="3" height="1" fill="#434474"/><rect x="8" y="8" width="1" height="1" fill="#c8c8d8"/><rect x="9" y="8" width="2" height="1" fill="#434474"/><rect x="11" y="8" width="3" height="1" fill="#000"/><rect x="4" y="9" width="3" height="1" fill="#000"/><rect x="7" y="9" width="2" height="1" fill="#434474"/><rect x="9" y="9" width="3" height="1" fill="#000"/><rect x="6" y="10" width="4" height="1" fill="#000"/><rect x="7" y="11" width="2" height="1" fill="#000"/></svg>
<div class="t" style="left:23px;top:142px;transform:scaleX(0.97);">Voltages</div>
 <svg style="left:5px;top:140px" width="16" height="16"><use href="#volt"/></svg>
<div class="t" style="left:39px;top:159px;transform:scaleX(0.92);">CPU Core</div>
<div class="n" style="left:160px;top:159px;width:62px;">1.28</div>
<div class="n" style="left:227px;top:159px;width:62px;">1.30</div>
<div class="n" style="left:294px;top:159px;width:62px;">1.30</div>
 <svg style="left:21px;top:159px" width="16" height="12" shape-rendering="crispEdges"><rect x="7" y="0" width="2" height="1" fill="#000"/><rect x="5" y="1" width="2" height="1" fill="#000"/><rect x="7" y="1" width="2" height="1" fill="#5c5d94"/><rect x="9" y="1" width="2" height="1" fill="#000"/><rect x="3" y="2" width="2" height="1" fill="#000"/><rect x="5" y="2" width="6" height="1" fill="#5c5d94"/><rect x="11" y="2" width="2" height="1" fill="#000"/><rect x="1" y="3" width="2" height="1" fill="#000"/><rect x="3" y="3" width="3" height="1" fill="#5c5d94"/><rect x="6" y="3" width="4" height="1" fill="#000"/><rect x="10" y="3" width="3" height="1" fill="#5c5d94"/><rect x="13" y="3" width="2" height="1" fill="#000"/><rect x="0" y="4" width="1" height="1" fill="#000"/><rect x="1" y="4" width="2" height="1" fill="#5c5d94"/><rect x="3" y="4" width="2" height="1" fill="#434474"/><rect x="5" y="4" width="6" height="1" fill="#000"/><rect x="11" y="4" width="2" height="1" fill="#434474"/><rect x="13" y="4" width="2" height="1" fill="#5c5d94"/><rect x="15" y="4" width="1" height="1" fill="#000"/><rect x="0" y="5" width="1" height="1" fill="#000"/><rect x="1" y="5" width="1" height="1" fill="#c8c8d8"/><rect x="2" y="5" width="4" height="1" fill="#434474"/><rect x="6" y="5" width="4" height="1" fill="#000"/><rect x="10" y="5" width="5" height="1" fill="#434474"/><rect x="15" y="5" width="1" height="1" fill="#000"/><rect x="0" y="6" width="1" height="1" fill="#000"/><rect x="1" y="6" width="2" height="1" fill="#434474"/><rect x="3" y="6" width="1" height="1" fill="#c8c8d8"/><rect x="4" y="6" width="3" height="1" fill="#434474"/><rect x="7" y="6" width="2" height="1" fill="#000"/><rect x="9" y="6" width="4" height="1" fill="#434474"/><rect x="13" y="6" width="1" height="1" fill="#c8c8d8"/><rect x="14" y="6" width="1" height="1" fill="#434474"/><rect x="15" y="6" width="1" height="1" fill="#000"/><rect x="0" y="7" width="2" height="1" fill="#000"/><rect x="2" y="7" width="2" height="1" fill="#434474"/><rect x="4" y="7" width="1" height="1" fill="#c8c8d8"/><rect x="5" y="7" width="9" height="1" fill="#434474"/><rect x="14" y="7" width="2" height="1" fill="#000"/><rect x="2" y="8" width="3" height="1" fill="#000"/><rect x="5" y="8" width="3" height="1" fill="#434474"/><rect x="8" y="8" width="1" height="1" fill="#c8c8d8"/><rect x="9" y="8" width="2" height="1" fill="#434474"/><rect x="11" y="8" width="3" height="1" fill="#000"/><rect x="4" y="9" width="3" height="1" fill="#000"/><rect x="7" y="9" width="2" height="1" fill="#434474"/><rect x="9" y="9" width="3" height="1" fill="#000"/><rect x="6" y="10" width="4" height="1" fill="#000"/><rect x="7" y="11" width="2" height="1" fill="#000"/></svg>
<div class="t" style="left:39px;top:176px;">+3.3 V</div>
<div class="n" style="left:160px;top:176px;width:62px;">3.33</div>
<div class="n" style="left:227px;top:176px;width:62px;">3.33</div>
<div class="n" style="left:294px;top:176px;width:62px;">3.33</div>
 <svg style="left:21px;top:176px" width="16" height="12" shape-rendering="crispEdges"><rect x="7" y="0" width="2" height="1" fill="#000"/><rect x="5" y="1" width="2" height="1" fill="#000"/><rect x="7" y="1" width="2" height="1" fill="#5c5d94"/><rect x="9" y="1" width="2" height="1" fill="#000"/><rect x="3" y="2" width="2" height="1" fill="#000"/><rect x="5" y="2" width="6" height="1" fill="#5c5d94"/><rect x="11" y="2" width="2" height="1" fill="#000"/><rect x="1" y="3" width="2" height="1" fill="#000"/><rect x="3" y="3" width="3" height="1" fill="#5c5d94"/><rect x="6" y="3" width="4" height="1" fill="#000"/><rect x="10" y="3" width="3" height="1" fill="#5c5d94"/><rect x="13" y="3" width="2" height="1" fill="#000"/><rect x="0" y="4" width="1" height="1" fill="#000"/><rect x="1" y="4" width="2" height="1" fill="#5c5d94"/><rect x="3" y="4" width="2" height="1" fill="#434474"/><rect x="5" y="4" width="6" height="1" fill="#000"/><rect x="11" y="4" width="2" height="1" fill="#434474"/><rect x="13" y="4" width="2" height="1" fill="#5c5d94"/><rect x="15" y="4" width="1" height="1" fill="#000"/><rect x="0" y="5" width="1" height="1" fill="#000"/><rect x="1" y="5" width="1" height="1" fill="#c8c8d8"/><rect x="2" y="5" width="4" height="1" fill="#434474"/><rect x="6" y="5" width="4" height="1" fill="#000"/><rect x="10" y="5" width="5" height="1" fill="#434474"/><rect x="15" y="5" width="1" height="1" fill="#000"/><rect x="0" y="6" width="1" height="1" fill="#000"/><rect x="1" y="6" width="2" height="1" fill="#434474"/><rect x="3" y="6" width="1" height="1" fill="#c8c8d8"/><rect x="4" y="6" width="3" height="1" fill="#434474"/><rect x="7" y="6" width="2" height="1" fill="#000"/><rect x="9" y="6" width="4" height="1" fill="#434474"/><rect x="13" y="6" width="1" height="1" fill="#c8c8d8"/><rect x="14" y="6" width="1" height="1" fill="#434474"/><rect x="15" y="6" width="1" height="1" fill="#000"/><rect x="0" y="7" width="2" height="1" fill="#000"/><rect x="2" y="7" width="2" height="1" fill="#434474"/><rect x="4" y="7" width="1" height="1" fill="#c8c8d8"/><rect x="5" y="7" width="9" height="1" fill="#434474"/><rect x="14" y="7" width="2" height="1" fill="#000"/><rect x="2" y="8" width="3" height="1" fill="#000"/><rect x="5" y="8" width="3" height="1" fill="#434474"/><rect x="8" y="8" width="1" height="1" fill="#c8c8d8"/><rect x="9" y="8" width="2" height="1" fill="#434474"/><rect x="11" y="8" width="3" height="1" fill="#000"/><rect x="4" y="9" width="3" height="1" fill="#000"/><rect x="7" y="9" width="2" height="1" fill="#434474"/><rect x="9" y="9" width="3" height="1" fill="#000"/><rect x="6" y="10" width="4" height="1" fill="#000"/><rect x="7" y="11" width="2" height="1" fill="#000"/></svg>
<div class="t" style="left:39px;top:193px;transform:scaleX(0.97);">+5 V</div>
<div class="n" style="left:160px;top:193px;width:62px;">4.95</div>
<div class="n" style="left:227px;top:193px;width:62px;">4.97</div>
<div class="n" style="left:294px;top:193px;width:62px;">4.97</div>
 <svg style="left:21px;top:191px" width="16" height="16"><use href="#volt"/></svg>
<div class="t" style="left:39px;top:210px;transform:scaleX(0.98);">+12 V</div>
<div class="n" style="left:160px;top:210px;width:62px;">11.84</div>
<div class="n" style="left:227px;top:210px;width:62px;">11.97</div>
<div class="n" style="left:294px;top:210px;width:62px;">11.92</div>
 <svg style="left:21px;top:208px" width="16" height="16"><use href="#volt"/></svg>
<div class="t" style="left:39px;top:227px;transform:scaleX(0.94);">DIMM</div>
<div class="n" style="left:160px;top:227px;width:62px;">1.94</div>
<div class="n" style="left:227px;top:227px;width:62px;">1.94</div>
<div class="n" style="left:294px;top:227px;width:62px;">1.94</div>
 <svg style="left:21px;top:229px" width="16" height="8" shape-rendering="crispEdges"><rect x="0" y="0" width="15" height="1" fill="#a49ea4"/><rect x="15" y="0" width="1" height="1" fill="#000"/><rect x="0" y="1" width="1" height="1" fill="#a49ea4"/><rect x="1" y="1" width="14" height="1" fill="#008c00"/><rect x="15" y="1" width="1" height="1" fill="#000"/><rect x="0" y="2" width="1" height="1" fill="#a49ea4"/><rect x="1" y="2" width="2" height="1" fill="#008c00"/><rect x="3" y="2" width="1" height="1" fill="#f0f0f0"/><rect x="4" y="2" width="1" height="1" fill="#000"/><rect x="5" y="2" width="1" height="1" fill="#008c00"/><rect x="6" y="2" width="1" height="1" fill="#f0f0f0"/><rect x="7" y="2" width="1" height="1" fill="#000"/><rect x="8" y="2" width="1" height="1" fill="#008c00"/><rect x="9" y="2" width="1" height="1" fill="#f0f0f0"/><rect x="10" y="2" width="1" height="1" fill="#000"/><rect x="11" y="2" width="1" height="1" fill="#008c00"/><rect x="12" y="2" width="1" height="1" fill="#f0f0f0"/><rect x="13" y="2" width="1" height="1" fill="#000"/><rect x="14" y="2" width="1" height="1" fill="#008c00"/><rect x="15" y="2" width="1" height="1" fill="#000"/><rect x="0" y="3" width="1" height="1" fill="#a49ea4"/><rect x="1" y="3" width="2" height="1" fill="#008c00"/><rect x="3" y="3" width="1" height="1" fill="#f0f0f0"/><rect x="4" y="3" width="1" height="1" fill="#000"/><rect x="5" y="3" width="1" height="1" fill="#008c00"/><rect x="6" y="3" width="1" height="1" fill="#f0f0f0"/><rect x="7" y="3" width="1" height="1" fill="#000"/><rect x="8" y="3" width="1" height="1" fill="#008c00"/><rect x="9" y="3" width="1" height="1" fill="#f0f0f0"/><rect x="10" y="3" width="1" height="1" fill="#000"/><rect x="11" y="3" width="1" height="1" fill="#008c00"/><rect x="12" y="3" width="1" height="1" fill="#f0f0f0"/><rect x="13" y="3" width="1" height="1" fill="#000"/><rect x="14" y="3" width="1" height="1" fill="#008c00"/><rect x="15" y="3" width="1" height="1" fill="#000"/><rect x="0" y="4" width="1" height="1" fill="#a49ea4"/><rect x="1" y="4" width="2" height="1" fill="#008c00"/><rect x="3" y="4" width="2" height="1" fill="#000"/><rect x="5" y="4" width="1" height="1" fill="#008c00"/><rect x="6" y="4" width="2" height="1" fill="#000"/><rect x="8" y="4" width="1" height="1" fill="#008c00"/><rect x="9" y="4" width="2" height="1" fill="#000"/><rect x="11" y="4" width="1" height="1" fill="#008c00"/><rect x="12" y="4" width="2" height="1" fill="#000"/><rect x="14" y="4" width="1" height="1" fill="#008c00"/><rect x="15" y="4" width="1" height="1" fill="#000"/><rect x="0" y="5" width="1" height="1" fill="#000"/><rect x="1" y="5" width="14" height="1" fill="#008c00"/><rect x="15" y="5" width="1" height="1" fill="#000"/><rect x="1" y="6" width="6" height="1" fill="#ffff00"/><rect x="7" y="6" width="2" height="1" fill="#000"/><rect x="9" y="6" width="6" height="1" fill="#ffff00"/><rect x="15" y="6" width="1" height="1" fill="#000"/><rect x="1" y="7" width="6" height="1" fill="#000"/><rect x="9" y="7" width="7" height="1" fill="#000"/></svg>
</div>
<div class="t" style="left:26px;top:526px;transform:scaleX(0.99);">Remaining Battery:</div>
<div class="disp" style="left:127px;width:80px;padding-right:1px"><span style="transform:scaleX(1.02)">No battery</span></div>
<div class="t" style="left:232px;top:526px;transform:scaleX(1.03);">Test Started:</div>
<div class="disp" style="left:305px;width:140px;padding-right:2px"><span style="transform:scaleX(1.03)">05.01.2009 20:52:12</span></div>
<div class="t" style="left:470px;top:526px;transform:scaleX(0.96);">Elapsed Time:</div>
<div class="disp" style="left:545px;width:80px;padding-right:1px"><span style="transform:scaleX(1.04)">1:26:54</span></div>
<div class="btn" style="left:11px;"><span style="transform:scaleX(1.06)">Start</span></div>
<div class="btn" style="left:92px;color:#aca899;border-color:#c6c4bb;background:linear-gradient(#f4f3ee,#eeede7);"><span style="transform:scaleX(1.02)">Stop</span></div>
<div class="btn" style="left:196px;"><span style="transform:scaleX(1.0)">Clear</span></div>
<div class="btn" style="left:277px;border-color:#4e4c44;"><span style="transform:scaleX(1.0)">Save</span></div>
<div class="btn" style="left:381px;"><span style="transform:scaleX(1.0)">CPUID</span></div>
<div class="btn" style="left:462px;"><span style="transform:scaleX(1.0)">Preferences</span></div>
<div class="btn" style="left:566px;"><span style="transform:scaleX(1.0)">Close</span></div>
</body></html>
